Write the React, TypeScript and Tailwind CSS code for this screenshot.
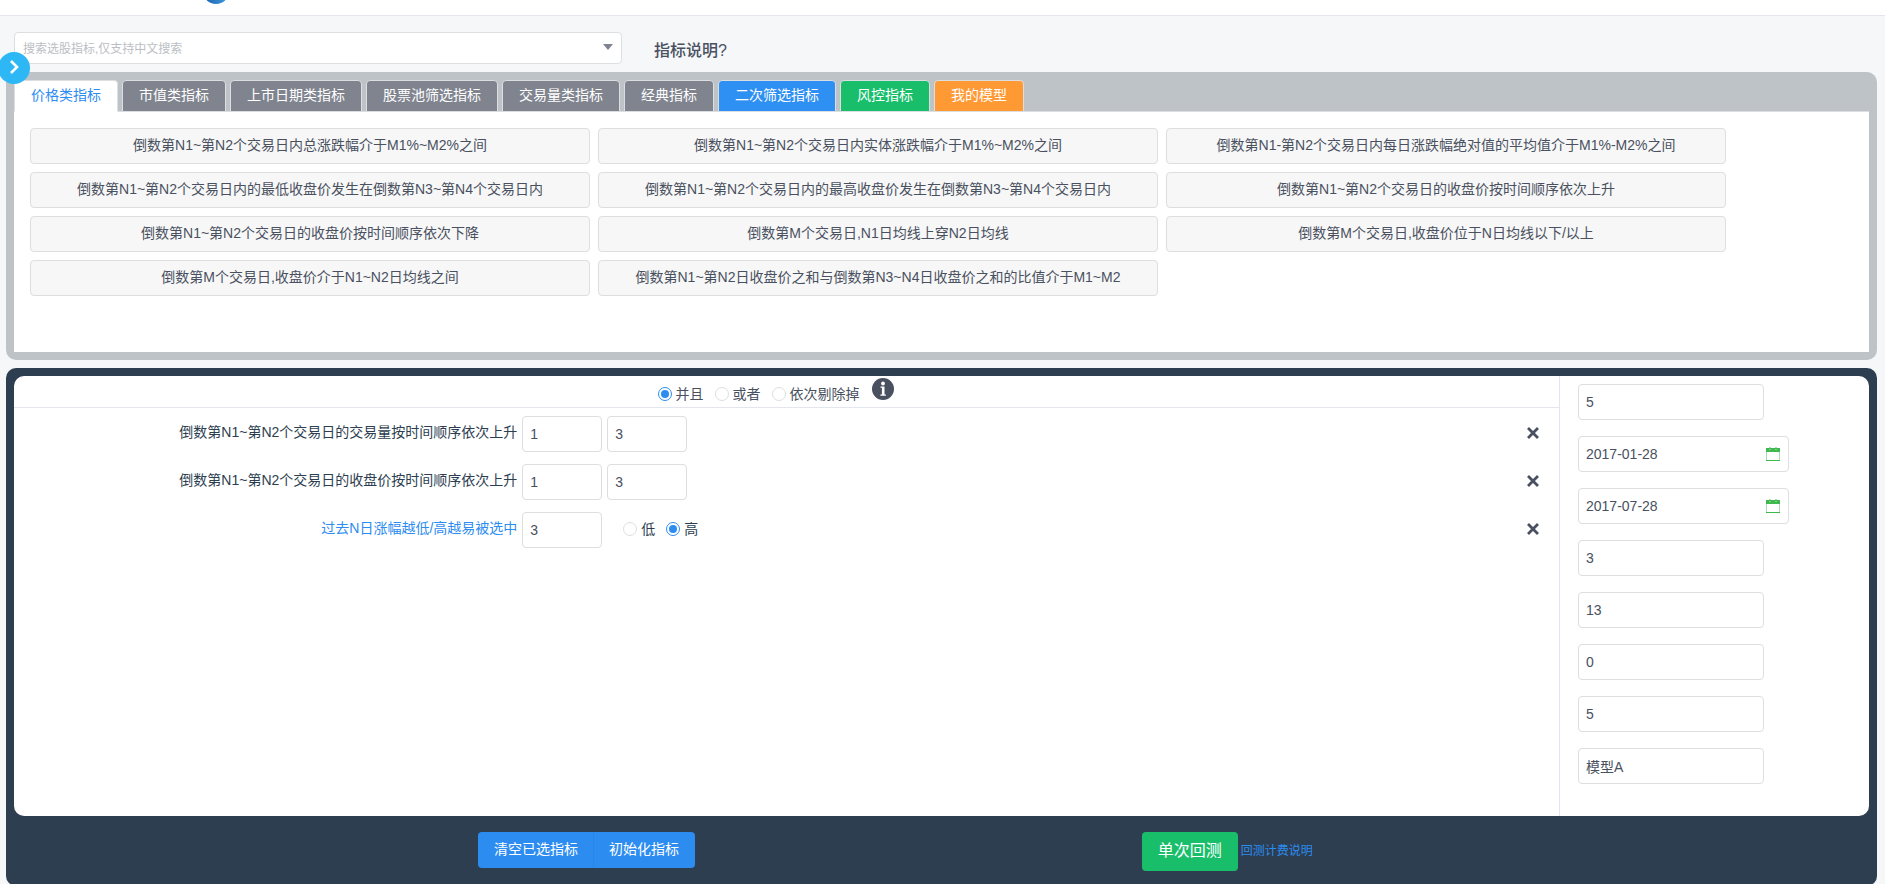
import { useState } from "react";

const tabs = [
  { name: "价格类指标", color: "bg-[#80848f]" },
  { name: "市值类指标", color: "bg-[#80848f]" },
  { name: "上市日期类指标", color: "bg-[#80848f]" },
  { name: "股票池筛选指标", color: "bg-[#80848f]" },
  { name: "交易量类指标", color: "bg-[#80848f]" },
  { name: "经典指标", color: "bg-[#80848f]" },
  { name: "二次筛选指标", color: "bg-[#2f90f3]" },
  { name: "风控指标", color: "bg-[#19be6b]" },
  { name: "我的模型", color: "bg-[#ff9933]" },
];

const indicators = [
  "倒数第N1~第N2个交易日内总涨跌幅介于M1%~M2%之间",
  "倒数第N1~第N2个交易日内实体涨跌幅介于M1%~M2%之间",
  "倒数第N1-第N2个交易日内每日涨跌幅绝对值的平均值介于M1%-M2%之间",
  "倒数第N1~第N2个交易日内的最低收盘价发生在倒数第N3~第N4个交易日内",
  "倒数第N1~第N2个交易日内的最高收盘价发生在倒数第N3~第N4个交易日内",
  "倒数第N1~第N2个交易日的收盘价按时间顺序依次上升",
  "倒数第N1~第N2个交易日的收盘价按时间顺序依次下降",
  "倒数第M个交易日,N1日均线上穿N2日均线",
  "倒数第M个交易日,收盘价位于N日均线以下/以上",
  "倒数第M个交易日,收盘价介于N1~N2日均线之间",
  "倒数第N1~第N2日收盘价之和与倒数第N3~N4日收盘价之和的比值介于M1~M2",
];

const initialRows = [
  { id: 1, name: "倒数第N1~第N2个交易日的交易量按时间顺序依次上升", values: ["1", "3"] },
  { id: 2, name: "倒数第N1~第N2个交易日的收盘价按时间顺序依次上升", values: ["1", "3"] },
  { id: 3, name: "过去N日涨幅越低/高越易被选中", values: ["3"], ranked: true },
];

const params = [
  { name: "hold", label: "持股天数", value: "5" },
  { name: "start", label: "开始日期", value: "2017-01-28", date: true },
  { name: "end", label: "结束日期", value: "2017-07-28", date: true },
  { name: "count", label: "持股数量", value: "3" },
  { name: "profit", label: "止盈", value: "13" },
  { name: "loss", label: "止损", value: "0" },
  { name: "times", label: "次数", value: "5" },
  { name: "model", label: "模型名称", value: "模型A" },
];

const inputClass =
  "h-9 rounded border border-[#dddee1] bg-white px-[7px] text-sm text-[#495060] outline-none focus:border-[#2d8cf0]";

const CalendarIcon = () => (
  <svg
    className="pointer-events-none absolute right-[9px] top-[11px]"
    width="14"
    height="14"
    viewBox="0 0 14 14"
  >
    <rect x="0.5" y="1.5" width="13" height="12" fill="#fff" stroke="#a9dcb2" />
    <rect y="1" width="14" height="4" fill="#3fb94f" />
    <rect y="13" width="14" height="1" fill="#3fb94f" />
    <path d="M3 0h2v1H3zM9 0h2v1H9z" fill="#a9dcb2" />
    <path d="M3 2h2v1H3zM9 2h2v1H9z" fill="#7fd08a" />
  </svg>
);

const CloseIcon = () => (
  <svg width="12" height="12" viewBox="0 0 12 12" fill="none">
    <path d="M1 1l10 10M11 1L1 11" stroke="#495060" strokeWidth="2.8" />
  </svg>
);

const InfoIcon = () => (
  <svg width="22" height="22" viewBox="0 0 22 22">
    <circle cx="11" cy="11" r="11" fill="#495060" />
    <circle cx="11" cy="5.5" r="1.9" fill="#fff" />
    <path d="M8.5 8.5h4v8h1.4v1.2H8.4v-1.2h1.5V9.7H8.5z" fill="#fff" />
  </svg>
);

type RadioProps = {
  name: string;
  label: string;
  checked: boolean;
  onChange: () => void;
};

const Radio = ({ name, label, checked, onChange }: RadioProps) => (
  <label className="flex cursor-pointer items-center gap-1 text-sm">
    <input
      type="radio"
      name={name}
      checked={checked}
      onChange={onChange}
      className="grid size-[14px] appearance-none place-items-center rounded-full border border-[#dddee1] bg-white before:size-2 before:rounded-full checked:border-[#2d8cf0] checked:before:bg-[#2d8cf0]"
    />
    {label}
  </label>
);

const App = () => {
  const [activeTab, setActiveTab] = useState(0);
  const [logic, setLogic] = useState("并且");
  const [rank, setRank] = useState("高");
  const [rows, setRows] = useState(initialRows);

  return (
    <div className="min-h-screen overflow-hidden bg-[#f5f7f9] font-['Liberation_Sans','Noto_Sans_CJK_SC',sans-serif] text-sm text-[#495060]">
      <header className="h-4 overflow-hidden border-b border-[#e3e6ee] bg-white">
        <svg className="-mt-[22px] ml-[203px]" width="26" height="26" viewBox="0 0 26 26">
          <defs>
            <linearGradient id="logo" x1="0" x2="1">
              <stop offset="0" stopColor="#1d5fa8" />
              <stop offset="1" stopColor="#3f9be6" />
            </linearGradient>
          </defs>
          <circle cx="13" cy="13" r="13" fill="url(#logo)" />
        </svg>
      </header>

      <div className="relative ml-[6px] mr-2 mt-4">
        <div className="flex items-center gap-8 pl-2">
          <div className="relative w-[608px]">
            <input
              type="text"
              aria-label="搜索选股指标"
              placeholder="搜索选股指标,仅支持中文搜索"
              className="h-8 w-full rounded border border-[#dddee1] bg-white px-2 pt-[2px] text-xs outline-none placeholder:text-[#bbbec4]"
            />
            <svg className="absolute right-[9px] top-3" width="10" height="6" viewBox="0 0 10 6">
              <path d="M0 0h10L5 6z" fill="#80848f" />
            </svg>
          </div>
          <h3 className="pt-[6px] text-base font-medium">指标说明?</h3>
        </div>
        <button
          type="button"
          aria-label="展开"
          className="absolute -left-2 top-5 z-10 flex size-8 items-center justify-center rounded-full bg-[#2db7f5] pb-[2px]"
        >
          <svg width="10" height="14" viewBox="0 0 10 14" fill="none">
            <path d="M2 1l6 6-6 6" stroke="#fff" strokeWidth="2.6" />
          </svg>
        </button>
      </div>

      <section className="ml-[6px] mr-2 mt-2 rounded-[10px] bg-[#bdc3c7] p-2">
        <div className="flex gap-1 border-b border-[#dddee1]">
          {tabs.map((tab, index) => (
            <button
              key={tab.name}
              type="button"
              onClick={() => setActiveTab(index)}
              className={`-mb-px h-8 rounded-t border border-[#dddee1] px-4 pb-[2px] ${
                index === activeTab
                  ? "border-b-white bg-white text-[#2d8cf0]"
                  : `${tab.color} text-white`
              }`}
            >
              {tab.name}
            </button>
          ))}
        </div>
        <div className="flex h-60 flex-wrap content-start gap-2 bg-white p-4">
          {indicators.map((item) => (
            <button
              key={item}
              type="button"
              className="h-9 w-[560px] rounded border border-[#dddee1] bg-[#f7f7f7] pb-[2px]"
            >
              {item}
            </button>
          ))}
        </div>
      </section>

      <section className="ml-[6px] mr-2 mt-2 rounded-[10px] bg-[#2c3e50] px-2 pt-2">
        <div className="flex rounded-[10px] bg-white">
          <div className="flex-1">
            <div className="flex h-8 items-start justify-center border-b border-[#e3e6ee] pr-[22px]">
              <div className="flex gap-[11px] pt-2">
                {["并且", "或者", "依次剔除掉"].map((item) => (
                  <Radio
                    key={item}
                    name="logic"
                    label={item}
                    checked={logic === item}
                    onChange={() => setLogic(item)}
                  />
                ))}
              </div>
              <button type="button" aria-label="说明" className="ml-3 mt-[2px]">
                <InfoIcon />
              </button>
            </div>
            <div className="flex flex-col gap-3 pt-2">
              {rows.map((row) => (
                <div key={row.id} className="flex items-center">
                  <label
                    htmlFor={`row-${row.id}`}
                    className={`w-[32.9%] pb-1 pr-[5px] text-right ${
                      row.ranked ? "text-[#2d8cf0]" : "text-[#2c3e50]"
                    }`}
                  >
                    {row.name}
                  </label>
                  <div className="flex flex-1 items-center gap-[5px]">
                    {row.values.map((value, index) => (
                      <input
                        key={index}
                        id={index === 0 ? `row-${row.id}` : undefined}
                        aria-label={index === 0 ? undefined : row.name}
                        type="text"
                        defaultValue={value}
                        className={`${inputClass} w-20`}
                      />
                    ))}
                    {row.ranked && (
                      <div className="ml-4 flex gap-[11px] pb-[2px] text-[#2c3e50]">
                        {["低", "高"].map((item) => (
                          <Radio
                            key={item}
                            name="rank"
                            label={item}
                            checked={rank === item}
                            onChange={() => setRank(item)}
                          />
                        ))}
                      </div>
                    )}
                  </div>
                  <button
                    type="button"
                    aria-label="删除"
                    className="mr-5 pb-[2px]"
                    onClick={() => setRows(rows.filter((r) => r.id !== row.id))}
                  >
                    <CloseIcon />
                  </button>
                </div>
              ))}
            </div>
          </div>
          <div className="flex w-[310px] flex-col gap-4 border-l border-[#e3e6ee] pb-8 pl-[18px] pt-2">
            {params.map((param) => (
              <div key={param.name} className={`relative ${param.date ? "w-[211px]" : "w-[186px]"}`}>
                <input
                  type="text"
                  aria-label={param.label}
                  name={param.name}
                  defaultValue={param.value}
                  className={`${inputClass} block w-full`}
                />
                {param.date && <CalendarIcon />}
              </div>
            ))}
          </div>
        </div>

        <div className="flex pb-[15px] pt-4">
          <div className="flex w-[60.8%] items-start pl-[464px]">
            <button
              type="button"
              onClick={() => setRows([])}
              className="h-9 rounded-l bg-[#2d8cf0] pb-[2px] pl-4 pr-[15px] text-white"
            >
              清空已选指标
            </button>
            <button
              type="button"
              onClick={() => setRows(initialRows)}
              className="h-9 rounded-r border-l border-[#2b85e4] bg-[#2d8cf0] pb-[2px] pl-[15px] pr-4 text-white"
            >
              初始化指标
            </button>
          </div>
          <div className="flex items-center gap-[3px]">
            <button
              type="button"
              className="h-[39px] rounded bg-[#19be6b] px-4 pb-[2px] text-base text-white"
            >
              单次回测
            </button>
            <a href="#" className="pb-[2px] text-xs text-[#2d8cf0]">
              回测计费说明
            </a>
          </div>
        </div>
      </section>
    </div>
  );
};

export default App;
